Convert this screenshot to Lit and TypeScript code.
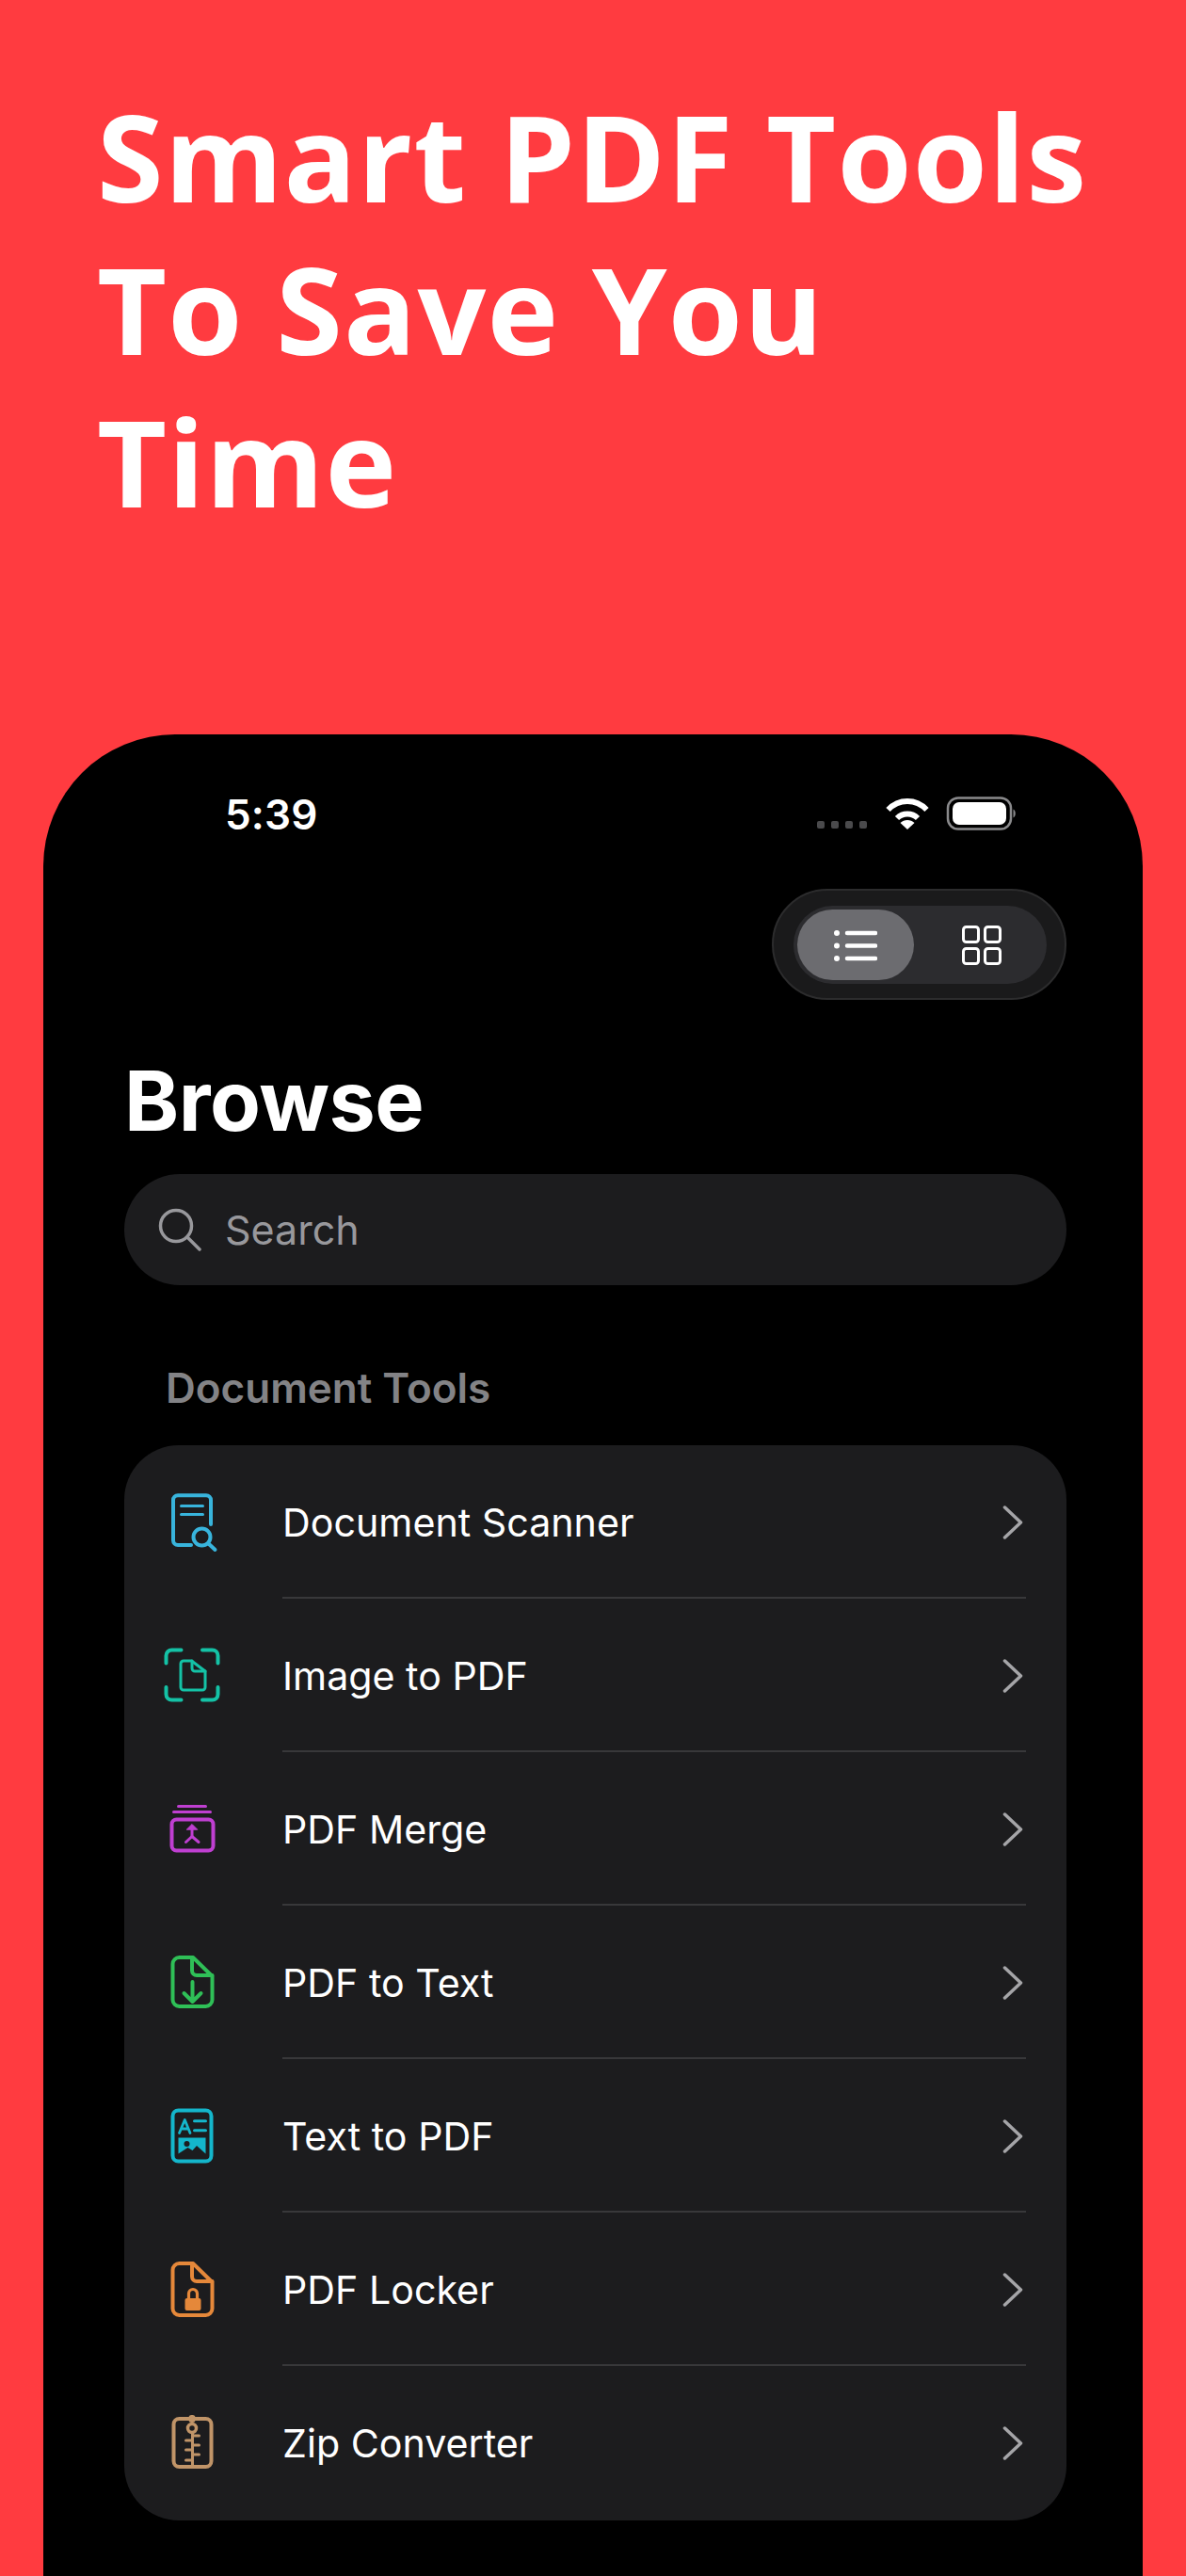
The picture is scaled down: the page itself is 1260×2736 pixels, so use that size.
import { LitElement, html, css, svg } from "lit";
import { customElement } from "lit/decorators.js";

const docBody = (t: number, b: number) => svg`<path d="M3.500 ${t + 7}a7 7 0 0 1 7-7H25L45.500 ${t + 20}V${b - 7}a7 7 0 0 1-7 7H10.500a7 7 0 0 1-7-7Z"/><path d="M24 ${t}V${t + 14}a5 5 0 0 0 5 5H45.500"/>`;

const icons = [
  { c: "#38b4dc", s: svg`<path d="M27 56H13a5 5 0 0 1-5-5V8.300a5 5 0 0 1 5-5H43a5 5 0 0 1 5 5V34"/><path d="M16.500 14.500h23M16.500 23.500h23" stroke-width="3"/><circle cx="38.500" cy="47.500" r="9"/><path d="M45.500 54.500l7 6.500"/>` },
  { c: "#14c2a6", s: svg`<path d="M3.500 17.500V9.500a6 6 0 0 1 6-6h10M42 3.500h10.500a6 6 0 0 1 6 6v8M58.500 43v7.500a6 6 0 0 1-6 6H42M19.500 56.500H9.500a6 6 0 0 1-6-6V43"/><path d="M19 18a3 3 0 0 1 3-3H30.500L45 26V43a3 3 0 0 1-3 3H22a3 3 0 0 1-3-3Z" stroke-width="3"/><path d="M31 15V23a3 3 0 0 0 3 3H45" stroke-width="3"/>` },
  { c: "#bf3fd1", s: svg`<path d="M10.500 1.500h29M5.500 7.500h39" stroke-width="3"/><rect x="3.500" y="15.500" width="44" height="33" rx="5"/><path d="M25 33.500V25" stroke-width="3"/><path d="M19.500 26l5.500-5.500 5.500 5.500z" fill="currentColor" stroke-width="1"/><path d="M25 33.500l-6.500 6M25 33.500l7 6" stroke-width="3"/>` },
  { c: "#2fbf57", s: svg`${docBody(4, 56)}<path d="M24.500 30V51M15.500 42L24.500 51L33.500 42"/>` },
  { c: "#14b6cb", s: svg`<rect x="3.500" y="2.500" width="41" height="54" rx="6"/><path d="M10.500 26.500L16.300 12.500L22 26.500M12.500 22h7.500" stroke-width="2.800"/><path d="M26.500 13.800h12M26.500 23.800h12" stroke-width="3"/><path fill="currentColor" stroke="none" d="M9.500 31.500H38.500V48.500L29 40L24.500 45L19.500 42L9.500 48.500Z"/><circle cx="18.500" cy="38" r="3" fill="#1c1c1e" stroke="none"/>` },
  { c: "#e5883a", s: svg`${docBody(3, 58)}<path d="M20.500 41V35a4.500 4.500 0 0 1 9 0v6" stroke-width="3.200"/><rect x="16.500" y="40" width="17" height="13" rx="2" fill="currentColor" stroke="none"/>` },
  { c: "#c09468", s: svg`<rect x="3.500" y="4" width="40" height="51" rx="6"/><rect x="19.500" y="0" width="7" height="8" rx="3" fill="currentColor" stroke="none"/><circle cx="23" cy="14" r="4.500" stroke-width="3.500"/><path d="M23.500 19V55M23.500 22h7M23.500 32h7M23.500 42h7M16.500 27h7M16.500 37h7M16.500 48h7" stroke-width="3"/>` },
];
const names = ["Document Scanner", "Image to PDF", "PDF Merge", "PDF to Text", "Text to PDF", "PDF Locker", "Zip Converter"];
const sizes: [number, number][] = [[56, 64], [62, 62], [50, 52], [48, 61], [48, 60], [48, 61], [46, 59]];

@customElement("app-root")
export class AppRoot extends LitElement {
  static styles = css`
    :host { display: block; height: 2736px; overflow: hidden; background: #ff3b40; font-family: Inter, sans-serif; }
    h1 { margin: 0; padding: 85px 60px 0 103px; font: 700 128px/162px "Open Sans", "Noto Sans", sans-serif; color: #fff; letter-spacing: 1.200px; height: 780px; box-sizing: border-box; }
    .phone { margin: 0 46px; height: 1956px; background: #000; border-radius: 140px 140px 0 0; padding: 0 81px 0 86px; box-sizing: border-box; color: #fff; }
    .status { height: 164px; position: relative; display: flex; align-items: flex-start; justify-content: space-between; }
    .time { font: 600 44px/54px Inter, sans-serif; margin: 58px 0 0 107px; letter-spacing: .2px; }
    .status-icons { display: flex; margin: 66px 51px 0 0; }
    .toggle-row { display: flex; justify-content: flex-end; }
    .toggle { width: 313px; height: 118px; box-sizing: border-box; border-radius: 59px; background: #1a1a1b; border: 2px solid #2c2c2d; padding: 16px 19px 15px 21px; }
    .track { height: 83px; border-radius: 42px; background: #2c2c2f; display: flex; align-items: center; padding-left: 4px; }
    .thumb { width: 124px; height: 75px; border-radius: 38px; background: #6c6c70; display: flex; align-items: center; justify-content: center; }
    .grid { flex: 1; display: flex; justify-content: center; padding-left: 3px; }
    h2 { margin: 54px 0 0; font: 700 88px/106px Inter, sans-serif; letter-spacing: -.5px; height: 131px; }
    .search { height: 118px; border-radius: 59px; background: #1c1c1e; display: flex; align-items: center; padding-left: 36px; gap: 25px; color: #98989c; font: 400 43px/54px Inter, sans-serif; }
    h3 { margin: 82px 0 0 44px; font: 600 44px/54px Inter, sans-serif; color: #838386; height: 88px; }
    .card { background: #1c1c1e; border-radius: 58px; height: 1142px; overflow: hidden; }
    .row { height: 163px; display: flex; align-items: center; position: relative; font: 400 41.200px/52px Inter, sans-serif; }
    .icon { width: 168px; flex: none; display: flex; justify-content: center; padding-right: 24px; box-sizing: border-box; }
    .icon svg { fill: none; stroke: currentColor; stroke-width: 4; stroke-linecap: round; stroke-linejoin: round; display: block; overflow: visible; }
    .label { flex: 1; }
    .chev { margin-right: 46px; display: block; }
    .sep { position: absolute; left: 168px; right: 43px; bottom: 0; height: 2px; background: #38383a; }
  `;

  render() {
    return html`
      <h1>Smart PDF Tools<br />To Save You<br />Time</h1>
      <div class="phone">
        <div class="status">
          <span class="time">5:39</span>
          <svg class="status-icons" width="214" height="36" viewBox="0 0 214 36">
            <g fill="#4a4a4c"><rect x="0" y="26" width="8" height="8" rx="2"/><rect x="15" y="26" width="8" height="8" rx="2"/><rect x="30" y="26" width="8" height="8" rx="2"/><rect x="45" y="26" width="8" height="8" rx="2"/></g>
            <g fill="none" stroke="#fff" stroke-width="6"><path d="M75.500 14C87 2 105 2 116.500 14"/><path d="M85 23c6-6 16-6 22 0"/></g>
            <path d="M96 35L88.500 28c4-4 11-4 15 0Z" fill="#fff"/>
            <rect x="139" y="1.500" width="67" height="33" rx="11" fill="none" stroke="#8a8a8c" stroke-width="2.500"/>
            <rect x="144" y="6" width="57" height="24" rx="7" fill="#fff"/>
            <path d="M208.500 13.500v9c3-1 3-8 0-9z" fill="#8a8a8c"/>
          </svg>
        </div>
        <div class="toggle-row">
          <div class="toggle"><div class="track">
            <div class="thumb">
              <svg width="46" height="34" viewBox="0 0 46 34" fill="none" stroke="#fff" stroke-linecap="round" stroke-width="4.500"><path d="M14 4h30M14 17.500h30M14 31h30"/><g fill="#fff" stroke="none"><circle cx="3" cy="4" r="3"/><circle cx="3" cy="17.500" r="3"/><circle cx="3" cy="31" r="3"/></g></svg>
            </div>
            <div class="grid">
              <svg width="42" height="42" viewBox="0 0 42 42" fill="none" stroke="#fff" stroke-width="3"><rect x="1.500" y="1.500" width="16" height="16" rx="3"/><rect x="24.500" y="1.500" width="16" height="16" rx="3"/><rect x="1.500" y="24.500" width="16" height="16" rx="3"/><rect x="24.500" y="24.500" width="16" height="16" rx="3"/></svg>
            </div>
          </div></div>
        </div>
        <h2>Browse</h2>
        <div class="search">
          <svg width="46" height="46" viewBox="0 0 46 46" fill="none" stroke="#98989c" stroke-width="3.500" stroke-linecap="round"><circle cx="19" cy="19" r="16.500"/><path d="M31 31l13 13"/></svg>
          <span>Search</span>
        </div>
        <h3>Document Tools</h3>
        <div class="card">
          ${names.map((n, i) => html`
            <div class="row">
              <div class="icon" style="color:${icons[i].c}">
                <svg width=${sizes[i][0]} height=${sizes[i][1]} viewBox="0 0 ${sizes[i][0]} ${sizes[i][1]}">${icons[i].s}</svg>
              </div>
              <span class="label">${n}</span>
              <svg class="chev" width="22" height="36" viewBox="0 0 22 36" fill="none" stroke="#a5a5a8" stroke-width="3.500" stroke-linecap="round" stroke-linejoin="round"><path d="M2.500 2L19.500 18L2.500 34"/></svg>
              ${i < 6 ? html`<div class="sep"></div>` : ""}
            </div>`)}
        </div>
      </div>
    `;
  }
}
